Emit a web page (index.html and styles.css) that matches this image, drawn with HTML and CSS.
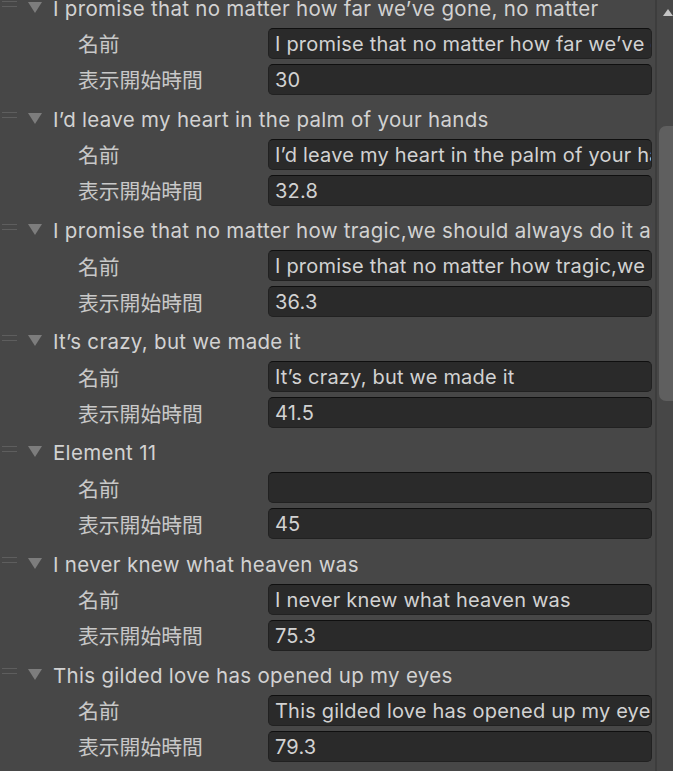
FILE: index.html
```html
<!DOCTYPE html>
<html lang="ja">
<head>
<meta charset="utf-8">
<title>Inspector</title>
<link rel="stylesheet" href="styles.css">
</head>
<body>
<div class="inspector">
  <div class="viewport">
    <div class="list">
      <div class="item">
        <div class="head"><span class="handle"></span><span class="arrow"></span><span class="title">I promise that no matter how far we’ve gone, no matter</span></div>
        <div class="row"><span class="label">名前</span><div class="field">I promise that no matter how far we’ve gone, no matter</div></div>
        <div class="row"><span class="label">表示開始時間</span><div class="field">30</div></div>
      </div>
      <div class="item">
        <div class="head"><span class="handle"></span><span class="arrow"></span><span class="title">I’d leave my heart in the palm of your hands</span></div>
        <div class="row"><span class="label">名前</span><div class="field">I’d leave my heart in the palm of your hands</div></div>
        <div class="row"><span class="label">表示開始時間</span><div class="field">32.8</div></div>
      </div>
      <div class="item">
        <div class="head"><span class="handle"></span><span class="arrow"></span><span class="title">I promise that no matter how tragic,we should always do it all</span></div>
        <div class="row"><span class="label">名前</span><div class="field">I promise that no matter how tragic,we should always do it all</div></div>
        <div class="row"><span class="label">表示開始時間</span><div class="field">36.3</div></div>
      </div>
      <div class="item">
        <div class="head"><span class="handle"></span><span class="arrow"></span><span class="title">It’s crazy, but we made it</span></div>
        <div class="row"><span class="label">名前</span><div class="field">It’s crazy, but we made it</div></div>
        <div class="row"><span class="label">表示開始時間</span><div class="field">41.5</div></div>
      </div>
      <div class="item">
        <div class="head"><span class="handle"></span><span class="arrow"></span><span class="title">Element 11</span></div>
        <div class="row"><span class="label">名前</span><div class="field"></div></div>
        <div class="row"><span class="label">表示開始時間</span><div class="field">45</div></div>
      </div>
      <div class="item">
        <div class="head"><span class="handle"></span><span class="arrow"></span><span class="title">I never knew what heaven was</span></div>
        <div class="row"><span class="label">名前</span><div class="field">I never knew what heaven was</div></div>
        <div class="row"><span class="label">表示開始時間</span><div class="field">75.3</div></div>
      </div>
      <div class="item">
        <div class="head"><span class="handle"></span><span class="arrow"></span><span class="title">This gilded love has opened up my eyes</span></div>
        <div class="row"><span class="label">名前</span><div class="field">This gilded love has opened up my eyes</div></div>
        <div class="row"><span class="label">表示開始時間</span><div class="field">79.3</div></div>
      </div>
    </div>
  </div>
  <div class="scrollbar">
    <div class="up"></div>
    <div class="thumb"></div>
  </div>
</div>
</body>
</html>
```
FILE: styles.css
```css
html, body {
  margin: 0;
  padding: 0;
  background: #474747;
  height: 100%;
  overflow: hidden;
}
body {
  font-family: Inter, "Noto Sans", "Noto Sans CJK JP", sans-serif;
  color: #d2d2d2;
  font-size: 20.5px;
}
.inspector {
  display: flex;
  height: 771px;
  width: 673px;
  overflow: hidden;
}
.viewport {
  width: 655px;
  flex: none;
  overflow: hidden;
}
.list {
  margin-top: -16.34px;
}
.item {
  padding-top: 10.17px;
  display: flex;
  flex-direction: column;
  gap: 5px;
}
.head {
  height: 29px;
  display: flex;
  align-items: center;
  white-space: nowrap;
  overflow: hidden;
  width: 652px;
}
.handle {
  width: 15px;
  height: 6px;
  margin-left: 2px;
  margin-top: -8px;
  border-top: 1.5px solid #5e5e5e;
  border-bottom: 1.5px solid #5e5e5e;
  box-sizing: border-box;
  flex: none;
}
.arrow {
  width: 0;
  height: 0;
  margin-left: 11px;
  margin-top: -2px;
  border-left: 7.5px solid transparent;
  border-right: 7.5px solid transparent;
  border-top: 11px solid #7d7d7d;
  flex: none;
}
.title {
  margin-left: 11px;
  letter-spacing: 0.3px;
}
.row {
  display: flex;
  align-items: center;
  height: 31px;
}
.label {
  width: 190px;
  margin-left: 78px;
  flex: none;
  font-family: "Noto Sans CJK JP", sans-serif;
  font-size: 20.8px;
  color: #c8c8c8;
}
.field {
  width: 384px;
  height: 31px;
  box-sizing: border-box;
  background: #2a2a2a;
  border: 1px solid #212121;
  border-top-color: #0f0f0f;
  border-radius: 5px;
  padding: 1px 6px 0;
  line-height: 29px;
  white-space: nowrap;
  overflow: hidden;
  color: #d2d2d2;
  font-size: 20px;
  letter-spacing: 0.2px;
}
.scrollbar {
  flex: 1;
  border-left: 2px solid #3d3d3d;
  display: flex;
  flex-direction: column;
  align-items: flex-end;
  background: #474747;
}
.up {
  width: 0;
  height: 0;
  margin-top: 9px;
  margin-right: 0;
  border-left: 5px solid transparent;
  border-right: 5px solid transparent;
  border-bottom: 7px solid #c4c4c4;
}
.thumb {
  width: 14px;
  margin-top: 110px;
  height: 275px;
  background: #5f5f5f;
  border-radius: 7px 0 0 7px;
}
```
